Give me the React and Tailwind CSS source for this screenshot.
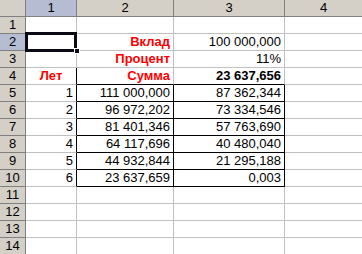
const rows = [
  [],
  [null, { t: "Вклад", red: true }, { t: "100 000,000" }],
  [null, { t: "Процент", red: true }, { t: "11%" }],
  [{ t: "Лет", red: true, center: true }, { t: "Сумма", red: true }, { t: "23 637,656", bold: true }],
  [{ t: "1" }, { t: "111 000,000" }, { t: "87 362,344" }],
  [{ t: "2" }, { t: "96 972,202" }, { t: "73 334,546" }],
  [{ t: "3" }, { t: "81 401,346" }, { t: "57 763,690" }],
  [{ t: "4" }, { t: "64 117,696" }, { t: "40 480,040" }],
  [{ t: "5" }, { t: "44 932,844" }, { t: "21 295,188" }],
  [{ t: "6" }, { t: "23 637,659" }, { t: "0,003" }],
  [],
  [],
  [],
  [],
];

// which borders are black: [row][col] -> {r, b}
function borders(r, c) {
  const rowNo = r + 1;
  let right = "border-r-[#c0c0c0]";
  let bottom = "border-b-[#c0c0c0]";
  if (c === 0 && rowNo >= 4 && rowNo <= 10) right = "border-r-black";
  if ((c === 1 || c === 2) && rowNo >= 5 && rowNo <= 10) right = "border-r-black";
  if ((c === 1 || c === 2) && rowNo >= 4 && rowNo <= 10) bottom = "border-b-black";
  return `${right} ${bottom}`;
}

export default function App() {
  return (
    <div
      className="relative w-[362px] h-[254px] overflow-hidden bg-white text-[13px] leading-[16px] text-black"
      style={{ fontFamily: '"Liberation Sans", Arial, sans-serif' }}
    >
      <div className="grid grid-cols-[26px_51px_97px_111px_78px] auto-rows-[17px]">
        {/* header row */}
        <div className="bg-[#d4d0c8] border-r border-b border-[#808080]" />
        <div className="bg-[#b6bdd2] border-r border-b border-[#808080] flex items-center justify-center">1</div>
        <div className="bg-[#d4d0c8] border-r border-b border-[#808080] flex items-center justify-center">2</div>
        <div className="bg-[#d4d0c8] border-r border-b border-[#808080] flex items-center justify-center">3</div>
        <div className="bg-[#d4d0c8] border-r border-b border-[#808080] flex items-center justify-center">4</div>

        {rows.map((row, r) => (
          <div key={r} className="contents">
            <div
              className={`border-r border-b border-[#808080] flex items-center justify-center ${
                r === 1 ? "bg-[#b6bdd2]" : "bg-[#d4d0c8]"
              }`}
            >
              {r + 1}
            </div>
            {[0, 1, 2, 3].map((c) => {
              const cell = row[c];
              return (
                <div
                  key={c}
                  className={`border-r border-b ${borders(r, c)} flex items-end px-[3px] ${
                    cell && cell.center ? "justify-center" : "justify-end"
                  } ${cell && cell.red ? "text-[#ff0000] font-bold" : ""} ${
                    cell && cell.bold ? "font-bold" : ""
                  }`}
                >
                  {cell ? cell.t : ""}
                </div>
              );
            })}
          </div>
        ))}
      </div>

      {/* active cell */}
      <div className="absolute left-[25px] top-[32px] w-[52px] h-[20px] border-[3px] border-[#0a0a14]" />
      <div className="absolute left-[74px] top-[48px] w-[6px] h-[6px] bg-[#0a0a14] border border-white" />
    </div>
  );
}
